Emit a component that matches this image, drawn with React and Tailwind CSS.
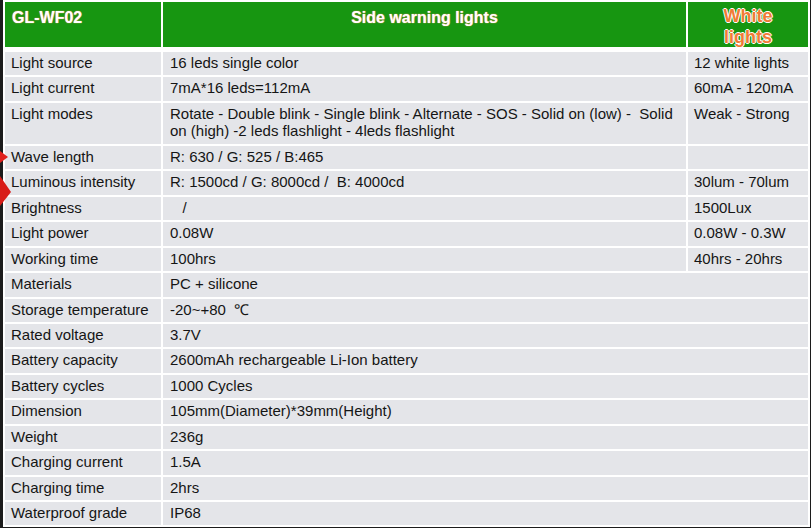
import React from "react";

const rows = [
  ["Light source", "16 leds single color", "12 white lights"],
  ["Light current", "7mA*16 leds=112mA", "60mA - 120mA"],
  [
    "Light modes",
    "Rotate - Double blink - Single blink - Alternate - SOS - Solid on (low) -  Solid on (high) -2 leds flashlight - 4leds flashlight",
    "Weak - Strong",
    true,
  ],
  ["Wave length", "R: 630 / G: 525 / B:465", ""],
  ["Luminous intensity", "R: 1500cd / G: 8000cd /  B: 4000cd", "30lum - 70lum"],
  ["Brightness", "\u00a0\u00a0\u00a0/", "1500Lux"],
  ["Light power", "0.08W", "0.08W - 0.3W"],
  ["Working time", "100hrs", "40hrs - 20hrs"],
  ["Materials", "PC + silicone", null],
  ["Storage temperature", "-20~+80  \u2103", null],
  ["Rated voltage", "3.7V", null],
  ["Battery capacity", "2600mAh rechargeable Li-Ion battery", null],
  ["Battery cycles", "1000 Cycles", null],
  ["Dimension", "105mm(Diameter)*39mm(Height)", null],
  ["Weight", "236g", null],
  ["Charging current", "1.5A", null],
  ["Charging time", "2hrs", null],
  ["Waterproof grade", "IP68", null],
];

const cell =
  "bg-[#e4e5e9] text-[#151515] text-[15px] leading-[17px] pt-[2px] whitespace-pre-wrap";

export default function App() {
  return (
    <div
      className="relative w-[811px] h-[528px] bg-[#1c1c1c] overflow-hidden"
      style={{ fontFamily: '"Liberation Sans", Arial, sans-serif' }}
    >
      <div className="ml-[3px] w-[807px] bg-white p-[2px]">
        <div className="grid grid-cols-[156px_523px_120px] gap-x-[2px] gap-y-[2px]">
          <div
            className="bg-[#179611] h-[45px] mb-[3px] pl-[7px] pt-[5px] text-[16px] leading-[21px] font-bold text-white"
            style={{ textShadow: "0 0 1px #e89a5c, 0 0 1px #e89a5c" }}
          >
            GL-WF02
          </div>
          <div
            className="bg-[#179611] h-[45px] mb-[3px] pt-[5px] text-center text-[16px] leading-[21px] font-bold text-white"
            style={{ textShadow: "0 0 1px #e89a5c, 0 0 1px #e89a5c" }}
          >
            Side warning lights
          </div>
          <div
            className="bg-[#179611] h-[45px] mb-[3px] pt-[4px] text-center text-[18px] leading-[21px] font-bold text-[#f07b35]"
            style={{
              textShadow:
                "1px 0 0 #fff, -1px 0 0 #fff, 0 1px 0 #fff, 0 -1px 0 #fff",
            }}
          >
            White
            <br />
            lights
          </div>
          {rows.map(([a, b, c, tall]) => {
            const h = tall ? "h-[41px]" : "h-[23.45px]";
            return (
              <React.Fragment key={a}>
                <div className={`${cell} ${h} pl-[6px]`}>{a}</div>
                {c === null ? (
                  <div className={`${cell} ${h} pl-[7px] col-span-2`}>{b}</div>
                ) : (
                  <>
                    <div className={`${cell} ${h} pl-[7px] pr-[6px]`}>{b}</div>
                    <div className={`${cell} ${h} pl-[6px]`}>{c}</div>
                  </>
                )}
              </React.Fragment>
            );
          })}
        </div>
      </div>
      <svg
        className="absolute left-0 top-[148px]"
        width="14"
        height="62"
        viewBox="0 0 14 62"
      >
        <polygon points="0,3 8,9 0,15" fill="#e0201c" />
        <polygon points="0,28 11,44 0,58" fill="#d81c18" />
      </svg>
    </div>
  );
}
